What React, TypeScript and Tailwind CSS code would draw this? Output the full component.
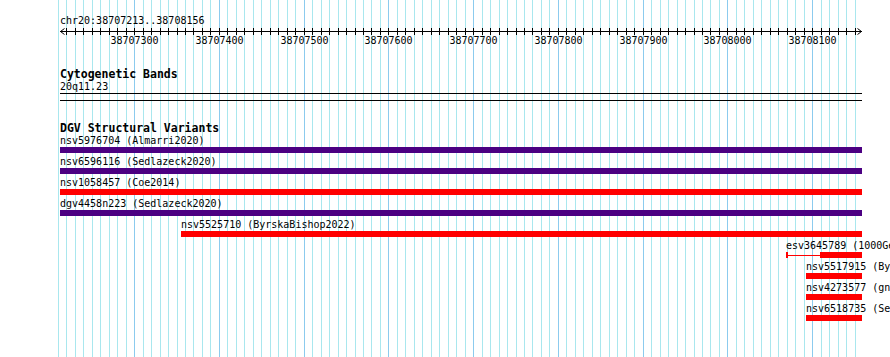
import React from 'react';

const START = 38707212.5;
const PX_PER_BP = 0.8475;
const toX = (bp: number) => Math.round(60 + (bp - START) * PX_PER_BP);

const gridBps: number[] = [];
for (let bp = 38707210; bp <= 38708150; bp += 10) gridBps.push(bp);

const mono = "font-['DejaVu_Sans_Mono','Liberation_Mono',monospace]";

interface Feature {
  label: string;
  offset: string;
  bar: string;
  color: string;
  split?: boolean;
}

const features: Feature[] = [
  { label: 'nsv5976704 (Almarri2020)', offset: 'ml-0', bar: 'w-[802px]', color: 'bg-[#4b0082]' },
  { label: 'nsv6596116 (Sedlazeck2020)', offset: 'ml-0', bar: 'w-[802px]', color: 'bg-[#4b0082]' },
  { label: 'nsv1058457 (Coe2014)', offset: 'ml-0', bar: 'w-[802px]', color: 'bg-[#ff0000]' },
  { label: 'dgv4458n223 (Sedlazeck2020)', offset: 'ml-0', bar: 'w-[802px]', color: 'bg-[#4b0082]' },
  { label: 'nsv5525710 (ByrskaBishop2022)', offset: 'ml-[121px]', bar: 'w-[681px]', color: 'bg-[#ff0000]' },
  { label: 'esv3645789 (1000Genomes)', offset: 'ml-[726px]', bar: 'w-[76px]', color: 'bg-[#ff0000]', split: true },
  { label: 'nsv5517915 (ByrskaBishop2022)', offset: 'ml-[746px]', bar: 'w-[56px]', color: 'bg-[#ff0000]' },
  { label: 'nsv4273577 (gnomAD)', offset: 'ml-[746px]', bar: 'w-[56px]', color: 'bg-[#ff0000]' },
  { label: 'nsv6518735 (Sedlazeck2020)', offset: 'ml-[746px]', bar: 'w-[56px]', color: 'bg-[#ff0000]' },
];

const Grid: React.FC = () => (
  <svg className="absolute inset-0" width={890} height={357} shapeRendering="crispEdges">
    {gridBps.map((bp) => (
      <rect
        key={bp}
        x={toX(bp)}
        y={0}
        width={1}
        height={357}
        fill={bp % 100 === 0 ? '#8ccbee' : '#a9e7ee'}
      />
    ))}
  </svg>
);

const Ruler: React.FC = () => (
  <svg className="block" width={890} height={23} shapeRendering="crispEdges">
    <rect x={60} y={4} width={802} height={1} fill="#000" />
    <path d="M60.5 4.5 L64.5 1.5 M60.5 4.5 L64.5 7.5" stroke="#000" fill="none" shapeRendering="auto" />
    <path d="M861.5 4.5 L857.5 1.5 M861.5 4.5 L857.5 7.5" stroke="#000" fill="none" shapeRendering="auto" />
    {gridBps
      .filter((bp) => bp > 38707213)
      .map((bp) => (
        <rect key={bp} x={toX(bp)} y={1} width={1} height={7} fill="#000" />
      ))}
    {gridBps
      .filter((bp) => bp % 100 === 0)
      .map((bp) => (
        <text
          key={bp}
          x={toX(bp) + 0.5}
          y={16.5}
          textAnchor="middle"
          fontFamily="DejaVu Sans Mono, monospace"
          fontSize={10}
          fill="#000"
        >
          {bp}
        </text>
      ))}
  </svg>
);

const FeatureRow: React.FC<{ f: Feature }> = ({ f }) => (
  <div className={`${f.offset} mb-[3px]`}>
    <div className="text-[10px] leading-[12px] whitespace-nowrap">{f.label}</div>
    {f.split ? (
      <div className={`flex items-center h-[6px] ${f.bar}`}>
        <div className={`w-[2px] h-[6px] ${f.color}`} />
        <div className={`w-[32px] h-px ${f.color}`} />
        <div className={`w-[42px] h-[6px] ${f.color}`} />
      </div>
    ) : (
      <div className={`h-[6px] ${f.bar} ${f.color}`} />
    )}
  </div>
);

export default function App() {
  return (
    <div className={`relative w-[890px] h-[357px] overflow-hidden bg-white text-black ${mono}`}>
      <Grid />
      <div className="relative">
        <div className="pl-[60px] pt-[15px] text-[10px] leading-[12px]">chr20:38707213..38708156</div>
        <Ruler />
        <div className="pl-[60px]">
          <div className="mt-[17px] text-[11.5px] leading-[14px] font-bold">Cytogenetic Bands</div>
          <div className="text-[10px] leading-[12px]">20q11.23</div>
          <div className="w-[802px] h-[8px] border-t border-b border-black" />
          <div className="mt-[20px] text-[11.5px] leading-[14px] font-bold">DGV Structural Variants</div>
          {features.map((f) => (
            <FeatureRow key={f.label} f={f} />
          ))}
        </div>
      </div>
    </div>
  );
}
